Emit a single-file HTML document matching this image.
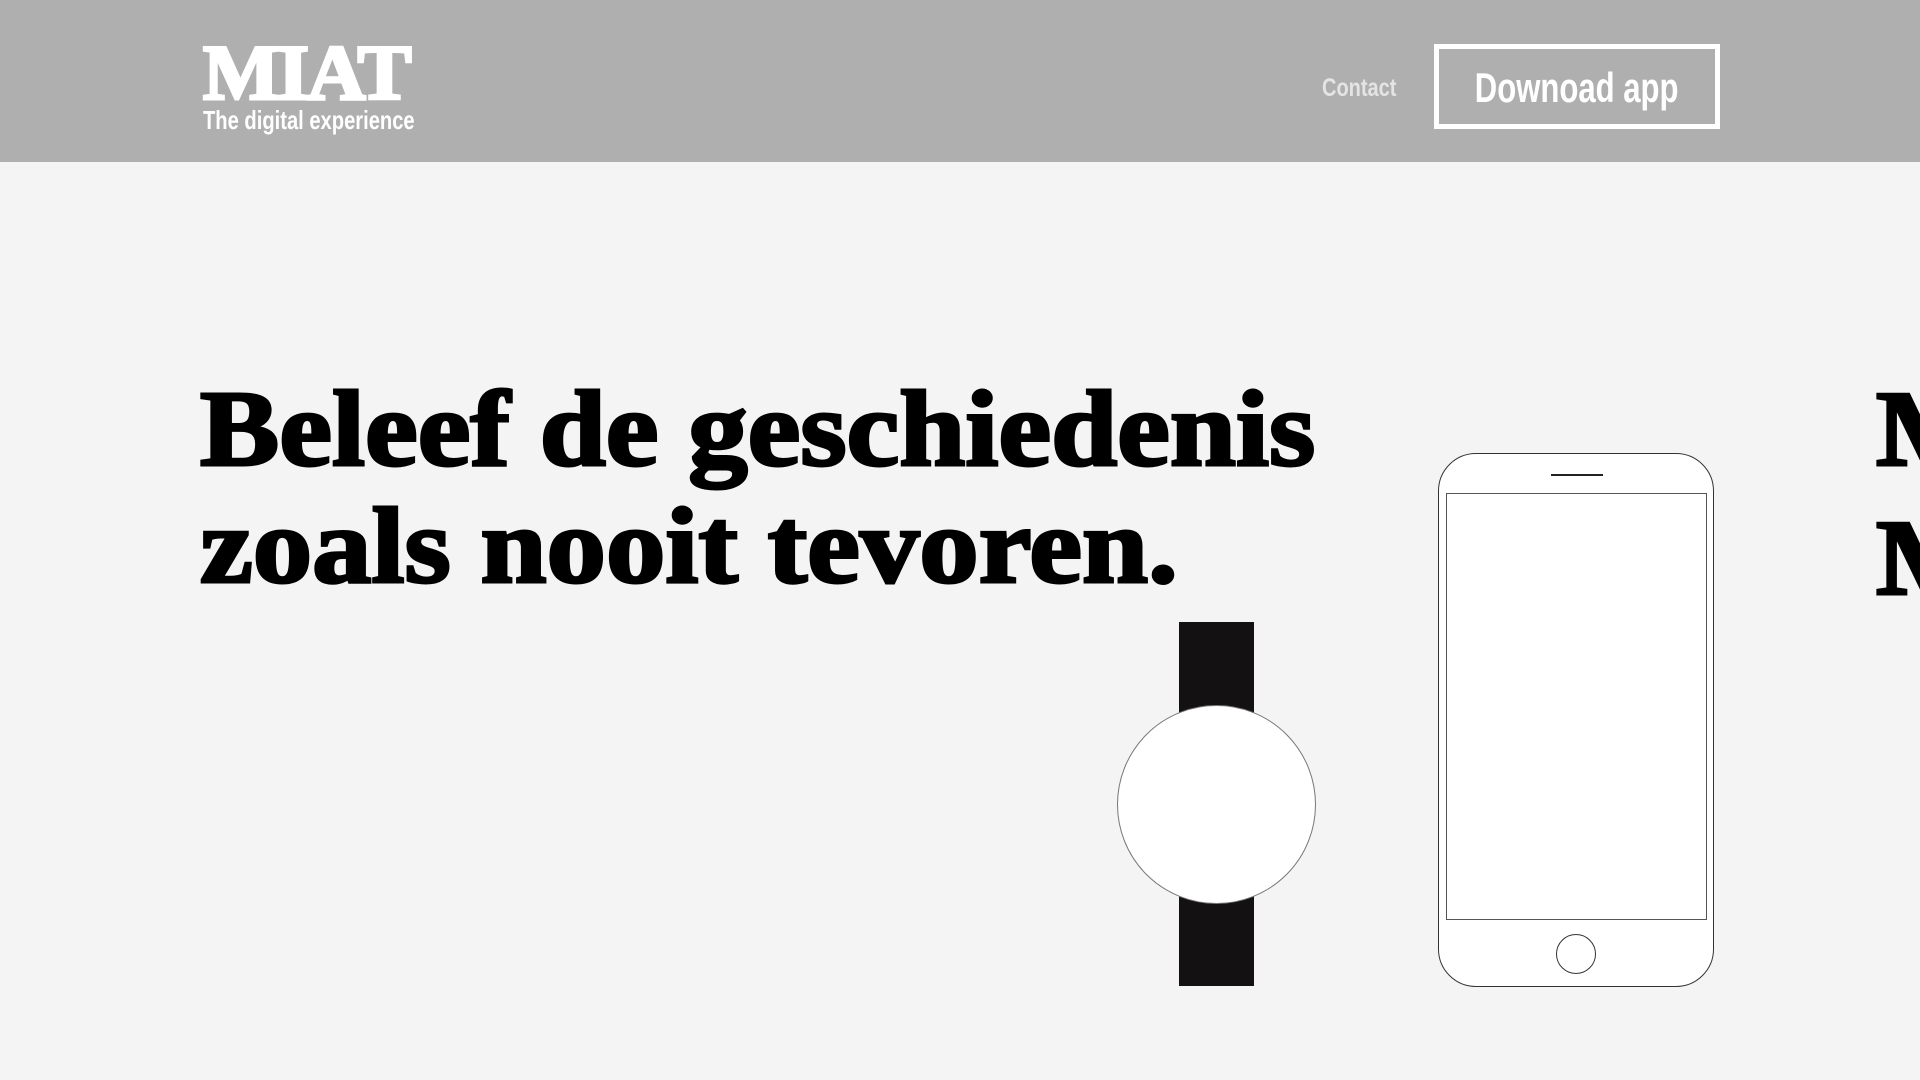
<!DOCTYPE html>
<html><head><meta charset="utf-8"><style>
*{margin:0;padding:0;box-sizing:border-box}
body{width:1920px;height:1080px;background:#f4f4f4;position:relative;overflow:hidden;font-family:"Liberation Sans",sans-serif}
.hdr{position:absolute;left:0;top:0;width:1920px;height:162px;background:#afafaf}
.logo{position:absolute;left:203px;top:28px;font-family:"Liberation Serif",serif;font-weight:bold;font-size:78px;color:#fff;letter-spacing:-2px;-webkit-text-stroke:3px #fff;transform:scaleX(1.04);transform-origin:left}
.sub{position:absolute;left:203px;top:105px;font-weight:bold;font-size:26px;color:#fff;transform:scaleX(0.775);transform-origin:left;white-space:nowrap}
.contact{position:absolute;left:1322px;top:74px;font-weight:bold;font-size:25px;color:#e4e4e4;transform:scaleX(0.8);transform-origin:left}
.btn{position:absolute;left:1434px;top:44px;width:286px;height:85px;border:5px solid #fff;color:#fff;font-weight:bold;font-size:42px;text-align:center;line-height:77px}
.btn span{display:inline-block;transform:scaleX(0.74)}
.h{position:absolute;left:200px;font-family:"Liberation Serif",serif;font-weight:bold;font-size:108px;color:#000;-webkit-text-stroke:3px #000;white-space:nowrap;line-height:1;transform:scaleX(1.1);transform-origin:left}
</style></head><body>
<div class="hdr">
<div class="logo">MIAT</div>
<div class="sub">The digital experience</div>
<div class="contact">Contact</div>
<div class="btn"><span>Downoad app</span></div>
</div>
<div class="h" style="top:376px">Beleef de geschiedenis</div>
<div class="h" style="top:493px">zoals nooit tevoren.</div>
<div class="h" style="top:376px;left:1876px">M</div>
<div class="h" style="top:505px;left:1876px">M</div>
<div style="position:absolute;left:1179px;top:622px;width:75px;height:364px;background:#131111"></div>
<div style="position:absolute;left:1117px;top:705px;width:199px;height:199px;border-radius:50%;background:#fff;border:1px solid #777"></div>
<div style="position:absolute;left:1438px;top:453px;width:276px;height:534px;border:1.5px solid #333;border-radius:38px;background:#fff"></div>
<div style="position:absolute;left:1446px;top:493px;width:261px;height:427px;border:1.5px solid #555;background:#fff"></div>
<div style="position:absolute;left:1551px;top:474px;width:52px;height:2px;background:#222"></div>
<div style="position:absolute;left:1556px;top:934px;width:40px;height:40px;border-radius:50%;border:1.5px solid #333"></div>
</body></html>
